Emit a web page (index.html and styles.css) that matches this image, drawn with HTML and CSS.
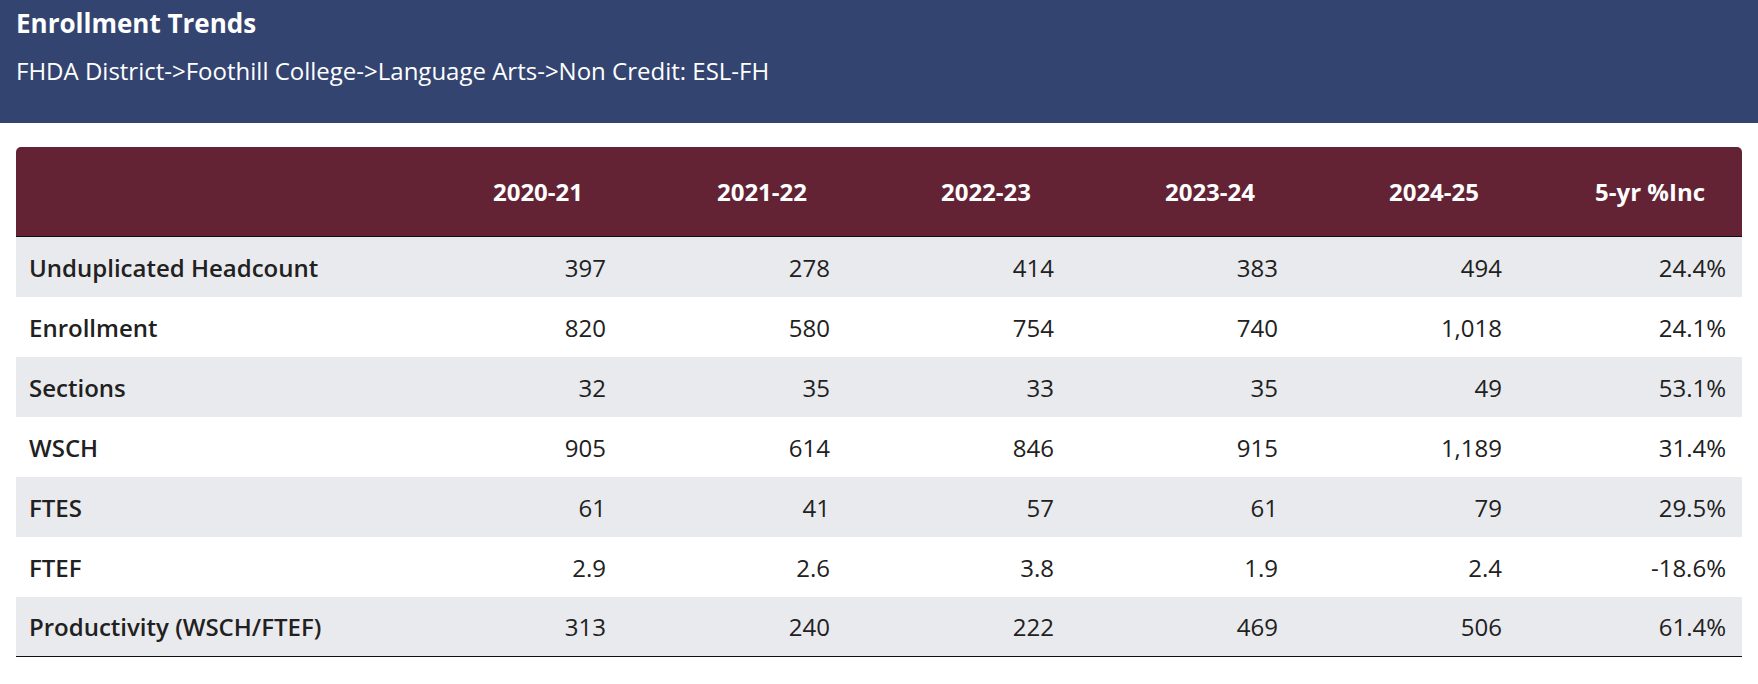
FILE: index.html
```html
<!DOCTYPE html>
<html lang="en">
<head>
<meta charset="utf-8">
<title>Enrollment Trends</title>
<link rel="stylesheet" href="styles.css">
</head>
<body>
<header class="banner">
  <h1 class="banner-title">Enrollment Trends</h1>
  <p class="banner-path">FHDA District-&gt;Foothill College-&gt;Language Arts-&gt;Non Credit: ESL-FH</p>
</header>
<main class="content">
  <table class="trends">
    <colgroup>
      <col class="col-label">
      <col><col><col><col><col><col>
    </colgroup>
    <thead>
      <tr>
        <th class="th-label"></th>
        <th>2020-21</th>
        <th>2021-22</th>
        <th>2022-23</th>
        <th>2023-24</th>
        <th>2024-25</th>
        <th>5-yr %Inc</th>
      </tr>
    </thead>
    <tbody>
      <tr><th class="row-label">Unduplicated Headcount</th><td>397</td><td>278</td><td>414</td><td>383</td><td>494</td><td>24.4%</td></tr>
      <tr><th class="row-label">Enrollment</th><td>820</td><td>580</td><td>754</td><td>740</td><td>1,018</td><td>24.1%</td></tr>
      <tr><th class="row-label">Sections</th><td>32</td><td>35</td><td>33</td><td>35</td><td>49</td><td>53.1%</td></tr>
      <tr><th class="row-label">WSCH</th><td>905</td><td>614</td><td>846</td><td>915</td><td>1,189</td><td>31.4%</td></tr>
      <tr><th class="row-label">FTES</th><td>61</td><td>41</td><td>57</td><td>61</td><td>79</td><td>29.5%</td></tr>
      <tr><th class="row-label">FTEF</th><td>2.9</td><td>2.6</td><td>3.8</td><td>1.9</td><td>2.4</td><td>-18.6%</td></tr>
      <tr><th class="row-label">Productivity (WSCH/FTEF)</th><td>313</td><td>240</td><td>222</td><td>469</td><td>506</td><td>61.4%</td></tr>
    </tbody>
  </table>
</main>
</body>
</html>
```
FILE: styles.css
```css
html, body {
  margin: 0;
  padding: 0;
  background: #ffffff;
  font-family: "Open Sans", "Noto Sans", "Liberation Sans", sans-serif;
  color: #212121;
}

.banner {
  background: #344470;
  color: #ffffff;
  padding: 7px 16px 0;
  height: 123px;
  box-sizing: border-box;
}

.banner-title {
  margin: 0;
  font-size: 26px;
  line-height: 32px;
  font-weight: 700;
}

.banner-path {
  margin: 16px 0 0;
  font-size: 24px;
  line-height: 32px;
  font-weight: 400;
}

.content {
  padding: 24px 16px 0;
}

.trends {
  width: 100%;
  border-collapse: separate;
  border-spacing: 0;
  table-layout: fixed;
  font-size: 24px;
}

.col-label {
  width: 382px;
}

.trends thead th {
  background: #632335;
  color: #ffffff;
  font-weight: 700;
  height: 89px;
  padding: 0 39px 0 16px;
  text-align: right;
  vertical-align: middle;
  border-bottom: 1px solid #111111;
}

.trends thead th:first-child {
  border-top-left-radius: 5px;
}

.trends thead th:last-child {
  border-top-right-radius: 5px;
  padding-right: 37px;
}

.trends tbody th,
.trends tbody td {
  height: 60px;
  padding: 0 16px;
  vertical-align: middle;
  box-sizing: border-box;
}

.trends tbody td {
  text-align: right;
  font-weight: 400;
}

.trends .row-label {
  text-align: left;
  font-weight: 600;
  padding-left: 13px;
}

.trends tbody tr:nth-child(odd) th,
.trends tbody tr:nth-child(odd) td {
  background: #e9eaed;
}

.trends tbody tr:last-child th,
.trends tbody tr:last-child td {
  border-bottom: 1px solid #111111;
}
```
